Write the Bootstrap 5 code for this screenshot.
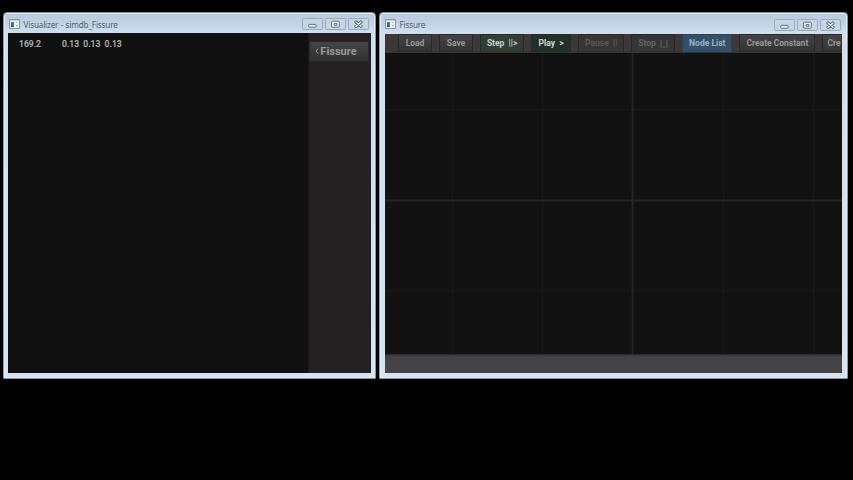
<!DOCTYPE html>
<html lang="en">
<head>
<meta charset="utf-8">
<meta name="viewport" content="width=device-width, initial-scale=1">
<title>Fissure</title>
<link href="https://cdn.jsdelivr.net/npm/bootstrap@5.3.0/dist/css/bootstrap.min.css" rel="stylesheet">
<style>
body{background:#000;font-family:Roboto,"Liberation Sans",sans-serif;height:480px;padding:12px 0 0 3px}
.desk{gap:3px}
.win{height:366.5px;border:1px solid #8395a6;border-radius:4px 4px 1px 1px;background:linear-gradient(#b9cbdd 0,#bccddf 5px,#d0deed 20px,#d7e4f2 100%);padding:0 4px 4px;box-shadow:inset 0 0 0 1px #deebf7}
.win-left{width:373px}
.win-right{width:469px;padding:0 5px 4px}
.title-bar{height:20px;font-family:"Noto Sans","Open Sans",sans-serif;font-size:8.2px;letter-spacing:-.19px;word-spacing:.5px;color:#4c5f73;line-height:12px;padding:3px 2px 0 1px}
.win-right .title-bar{padding:3px 1px 0 0;height:21px}
.title-bar span{padding-left:3.5px;padding-top:3px}
.app-icon{margin-top:3px}
.ctl{gap:2px;margin-top:2px}
.win-right .ctl{margin-top:3px}
.win-left .client{height:340px;background:#101010;color:#b2b2b2;font-size:8.6px}
.stats{padding:4.5px 0 0 11px;line-height:12px;font-weight:500;-webkit-text-stroke:.15px #b2b2b2}
.stats .first{width:43px}
.side{width:63px;background:linear-gradient(90deg,#1a1919,#232122 2px);padding:8px 2px 0 1px}
.side .btn{width:60px;height:21px;font-size:11px;padding-right:6px}
.tool{background:linear-gradient(#444446,#3b3b3c 45%,#313132);border:1px solid #292829;border-radius:1px;color:#989898;font-weight:700;font-size:8.5px;line-height:17px;padding:0;height:19px;white-space:pre;flex-shrink:0}
.win-right .client{height:339px;background:#121212}
.tools{height:19px;background:#3c3838;border-bottom:1px solid #333;padding-left:13px;gap:7.05px}
.w-load{width:34px}.w-save{width:34px}.w-step{width:44px}.w-play{width:40px}.w-pause{width:46px}.w-stop{width:44px}.w-node{width:50px}.w-const{width:76px}
.w-step{background:linear-gradient(#344036,#313d33);color:#ccd2ce}
.w-play{background:#223127;color:#d2d6d2}
.w-pause{background:#373634;color:#5c5a56}
.w-stop{background:#353535;color:#626262}
.w-node{background:#32506a;border-color:#2b4357;color:#9fb1bf}
.foot{height:19px;background:linear-gradient(#393939,#434245 2px,#454447);border-top:1px solid #2c2c2c}
</style>
</head>
<body class="m-0 overflow-hidden">
<svg width="0" height="0" class="d-none">
<symbol id="app" viewBox="0 0 11 10"><path d="M.5.5h10v9H.5z" fill="#edf1f4" stroke="#8897a5"/><path d="M1 1h9v1H1z" fill="#cbd3da"/><path d="M2 3h3v5H2z" fill="#39877c"/><path d="M2 6h2v2H2z" fill="#3c6299"/><path d="M7 3h1v1H7zM7 6h2v1H7z" fill="#a6afb6"/></symbol>
<symbol id="min" viewBox="0 0 21 12"><rect x=".5" y=".5" width="20" height="11" rx="1" fill="#c6d5e5" stroke="#9aabbd"/><rect x="6.700" y="6.400" width="7.500" height="2.800" rx=".8" fill="#eef3f7" stroke="#566371" stroke-width=".9"/></symbol>
<symbol id="max" viewBox="0 0 21 12"><rect x=".5" y=".5" width="20" height="11" rx="1" fill="#c6d5e5" stroke="#9aabbd"/><rect x="6.500" y="3.200" width="7.800" height="6" rx="1" fill="#eef3f7" stroke="#566371" stroke-width=".9"/><path d="M9 5.500h3v1.800h-3z" fill="#c6d5e5" stroke="#566371" stroke-width=".8"/></symbol>
<symbol id="close" viewBox="0 0 21 12"><rect x=".5" y=".5" width="20" height="11" rx="1" fill="#c6d5e5" stroke="#9aabbd"/><path d="M8 4l5 4.300M13 4L8 8.300" stroke="#566371" stroke-width="3.200" stroke-linecap="round"/><path d="M8 4l5 4.300M13 4L8 8.300" stroke="#eef3f7" stroke-width="1.500" stroke-linecap="round"/></symbol>
</svg>
<div class="desk d-flex">
  <section class="win win-left flex-shrink-0">
    <header class="title-bar d-flex align-items-start">
      <svg class="app-icon flex-shrink-0" width="11" height="10"><use href="#app"/></svg>
      <span>Visualizer - simdb_Fissure</span>
      <div class="ctl d-flex ms-auto"><svg width="21" height="12"><use href="#min"/></svg><svg width="21" height="12"><use href="#max"/></svg><svg width="21" height="12"><use href="#close"/></svg></div>
    </header>
    <div class="client d-flex">
      <div class="stats d-flex flex-grow-1"><div class="first">169.2</div><div>0.13&nbsp; 0.13&nbsp; 0.13</div></div>
      <aside class="side"><button class="btn tool d-flex align-items-center justify-content-center"><svg width="5" height="9" viewBox="0 0 5 9"><path d="M3 1.500L1 4l2 2.500" fill="none" stroke="#989898"/></svg>Fissure</button></aside>
    </div>
  </section>
  <section class="win win-right flex-shrink-0">
    <header class="title-bar d-flex align-items-start">
      <svg class="app-icon flex-shrink-0" width="11" height="10"><use href="#app"/></svg>
      <span>Fissure</span>
      <div class="ctl d-flex ms-auto"><svg width="21" height="12"><use href="#min"/></svg><svg width="21" height="12"><use href="#max"/></svg><svg width="21" height="12"><use href="#close"/></svg></div>
    </header>
    <div class="client d-flex flex-column overflow-hidden">
      <nav class="tools d-flex flex-shrink-0 overflow-hidden">
        <button class="btn tool w-load">Load</button>
        <button class="btn tool w-save">Save</button>
        <button class="btn tool w-step">Step  ||&gt;</button>
        <button class="btn tool w-play">Play  &gt;</button>
        <button class="btn tool w-pause">Pause  ||</button>
        <button class="btn tool w-stop">Stop  <svg width="8" height="8" viewBox="0 0 8 8"><path d="M1 0v7h6V0" fill="none" stroke="#626262"/></svg></button>
        <button class="btn tool w-node">Node List</button>
        <button class="btn tool w-const">Create Constant</button>
        <button class="btn tool w-const text-start ps-1">Cre</button>
      </nav>
      <svg class="flex-grow-1" width="458" height="301" viewBox="0 0 458 301">
        <path d="M67.500 0v301M157.500 0v301M338.500 0v301M428.500 0v301M0 56.500h458M0 238h458" stroke="#191919" stroke-width="1.500"/>
        <path d="M247.500 0v301M0 147.500h458" stroke="#252525" stroke-width="2"/>
      </svg>
      <footer class="foot flex-shrink-0"></footer>
    </div>
  </section>
</div>
<script src="https://cdn.jsdelivr.net/npm/bootstrap@5.3.0/dist/js/bootstrap.bundle.min.js"></script>
</body>
</html>
